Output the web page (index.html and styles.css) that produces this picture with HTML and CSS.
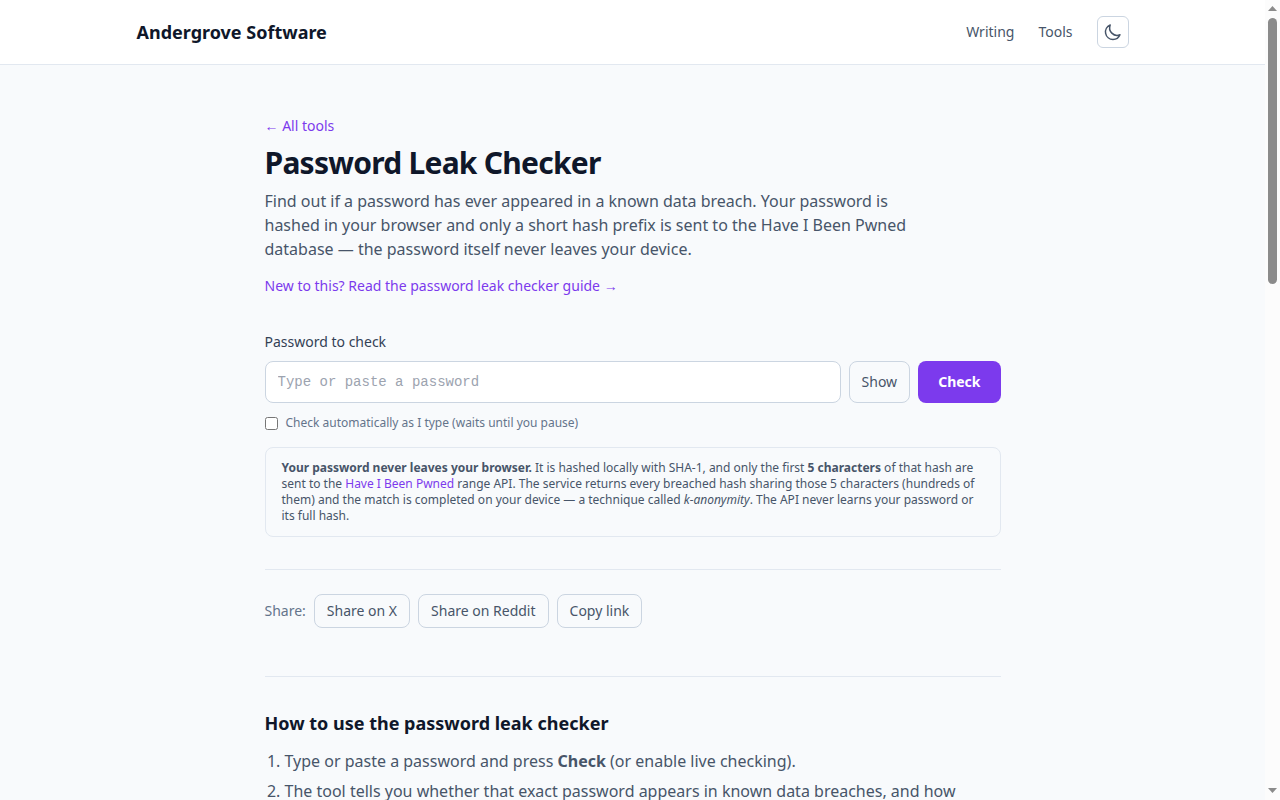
FILE: index.html
```html
<!DOCTYPE html>
<html lang="en">
<head>
<meta charset="utf-8">
<meta name="viewport" content="width=device-width, initial-scale=1">
<title>Password Leak Checker</title>
<link rel="stylesheet" href="styles.css">
</head>
<body>
<div class="page">
  <header class="site-header">
    <div class="header-inner">
      <a class="brand" href="#">Andergrove Software</a>
      <nav class="nav">
        <a href="#">Writing</a>
        <a href="#">Tools</a>
        <button class="theme-toggle" type="button" aria-label="Toggle dark mode">
          <svg viewBox="0 0 24 24" width="20" height="20" fill="none" stroke="currentColor" stroke-width="1.8" stroke-linecap="round" stroke-linejoin="round" aria-hidden="true"><path d="M20.354 15.354A9 9 0 0 1 8.646 3.646 9.003 9.003 0 0 0 12 21a9.003 9.003 0 0 0 8.354-5.646z"/></svg>
        </button>
      </nav>
    </div>
  </header>
  <main class="content">
    <div class="line"><a class="small-link" href="#">← All tools</a></div>
    <h1>Password Leak Checker</h1>
    <p class="lead">Find out if a password has ever appeared in a known data breach. Your password is hashed in your browser and only a short hash prefix is sent to the Have I Been Pwned database — the password itself never leaves your device.</p>
    <p class="guide"><a class="small-link" href="#">New to this? Read the password leak checker guide →</a></p>

    <form class="checker">
      <div class="line"><label class="field-label" for="password">Password to check</label></div>
      <div class="field-row">
        <input class="password" id="password" type="password" placeholder="Type or paste a password">
        <button class="button" type="button">Show</button>
        <button class="button primary" type="button">Check</button>
      </div>
      <label class="auto"><input type="checkbox">Check automatically as I type (waits until you pause)</label>
    </form>

    <p class="notice"><strong>Your password never leaves your browser.</strong> It is hashed locally with SHA-1, and only the first <strong>5 characters</strong> of that hash are sent to the <a href="#">Have I Been Pwned</a> range API. The service returns every breached hash sharing those 5 characters (hundreds of them) and the match is completed on your device — a technique called <em>k-anonymity</em>. The API never learns your password or its full hash.</p>

    <div class="share">
      <span class="share-label">Share:</span>
      <button class="button" type="button">Share on X</button>
      <button class="button" type="button">Share on Reddit</button>
      <button class="button" type="button">Copy link</button>
    </div>

    <section class="howto">
      <h2>How to use the password leak checker</h2>
      <ol>
        <li>Type or paste a password and press <strong>Check</strong> (or enable live checking).</li>
        <li>The tool tells you whether that exact password appears in known data breaches, and how</li>
      </ol>
    </section>
  </main>
</div>
<div class="scrollbar" aria-hidden="true">
  <svg width="9" height="5" viewBox="0 0 9 5"><path d="M4.500 0L9 5H0Z" fill="#8b8b8b"/></svg>
  <div class="track"><div class="thumb"></div></div>
  <svg width="9" height="5" viewBox="0 0 9 5"><path d="M0 0H9L4.500 5Z" fill="#8b8b8b"/></svg>
</div>
</body>
</html>
```
FILE: styles.css
```css
* {
  box-sizing: border-box;
}

body {
  margin: 0;
  display: grid;
  grid-template-columns: minmax(0, 1fr) 15px;
  height: 100vh;
  overflow: hidden;
  background: #f8fafc;
  color: #475569;
  font-family: "Noto Sans", sans-serif;
  font-size: 16px;
  line-height: 24px;
}

h1, h2, p, ol {
  margin: 0;
}

a {
  color: #7c3aed;
  text-decoration: none;
}

button, input {
  font: inherit;
}

.page {
  min-width: 0;
  height: 100vh;
  overflow: hidden;
}

.site-header {
  background: #fff;
  border-bottom: 1px solid #e2e8f0;
}

.header-inner {
  display: flex;
  align-items: center;
  justify-content: space-between;
  max-width: 1024px;
  margin: 0 auto;
  padding: 16px;
}

.brand {
  color: #0f172a;
  font-size: 18px;
  line-height: 28px;
  font-weight: 700;
}

.nav {
  display: flex;
  align-items: center;
  gap: 24px;
  font-size: 14px;
  line-height: 20px;
}

.nav a {
  color: #475569;
}

.theme-toggle {
  display: flex;
  align-items: center;
  justify-content: center;
  width: 32px;
  height: 32px;
  padding: 0;
  color: #475569;
  background: transparent;
  border: 1px solid #cbd5e1;
  border-radius: 6px;
}

.content {
  max-width: 768px;
  margin: 0 auto;
  padding: 48px 16px;
}

.small-link {
  font-size: 14px;
  line-height: 20px;
}

h1 {
  margin-top: 8px;
  color: #0f172a;
  font-size: 30px;
  line-height: 36px;
  font-weight: 700;
  letter-spacing: -0.025em;
}

.lead {
  max-width: 672px;
  margin-top: 8px;
}

.guide {
  margin-top: 12px;
}

.checker {
  margin-top: 32px;
}

.field-label {
  color: #334155;
  font-size: 14px;
  line-height: 20px;
}

.field-row {
  display: flex;
  gap: 8px;
  margin-top: 8px;
}

.password {
  flex: 1;
  min-width: 0;
  padding: 10px 12px;
  color: #0f172a;
  background: #fff;
  border: 1px solid #cbd5e1;
  border-radius: 8px;
  font-family: "Liberation Mono", monospace;
  font-size: 14px;
  line-height: 20px;
}

.password::placeholder {
  color: #9ca3af;
}

.button {
  padding: 6px 12px;
  color: #475569;
  background: transparent;
  border: 1px solid #cbd5e1;
  border-radius: 8px;
  font-size: 14px;
  line-height: 20px;
}

.primary {
  padding: 10px 20px;
  color: #fff;
  background: #7c3aed;
  border: 0;
  font-weight: 700;
}

.auto {
  display: flex;
  align-items: center;
  gap: 8px;
  margin-top: 12px;
  color: #64748b;
  font-size: 12px;
  line-height: 16px;
}

.auto input {
  width: 13px;
  height: 13px;
  margin: 0;
}

.notice {
  margin-top: 16px;
  padding: 12px 16px;
  border: 1px solid #e2e8f0;
  border-radius: 8px;
  font-size: 12px;
  line-height: 16px;
}

.share {
  display: flex;
  align-items: center;
  gap: 8px;
  margin-top: 32px;
  padding-top: 24px;
  border-top: 1px solid #e2e8f0;
}

.share-label {
  color: #64748b;
  font-size: 14px;
  line-height: 20px;
}

.howto {
  margin-top: 48px;
  padding-top: 32px;
  border-top: 1px solid #e2e8f0;
}

h2 {
  color: #0f172a;
  font-size: 18px;
  line-height: 28px;
  font-weight: 700;
}

ol {
  display: grid;
  gap: 6px;
  margin-top: 12px;
  padding-left: 20px;
}

.scrollbar {
  display: flex;
  flex-direction: column;
  align-items: center;
  gap: 7px;
  padding: 6px 0 7px;
  background: #fcfcfc;
}

.track {
  flex: 1;
}

.thumb {
  width: 9px;
  height: 34.8%;
  min-height: 24px;
  background: #8b8b8b;
  border-radius: 5px;
}
```
